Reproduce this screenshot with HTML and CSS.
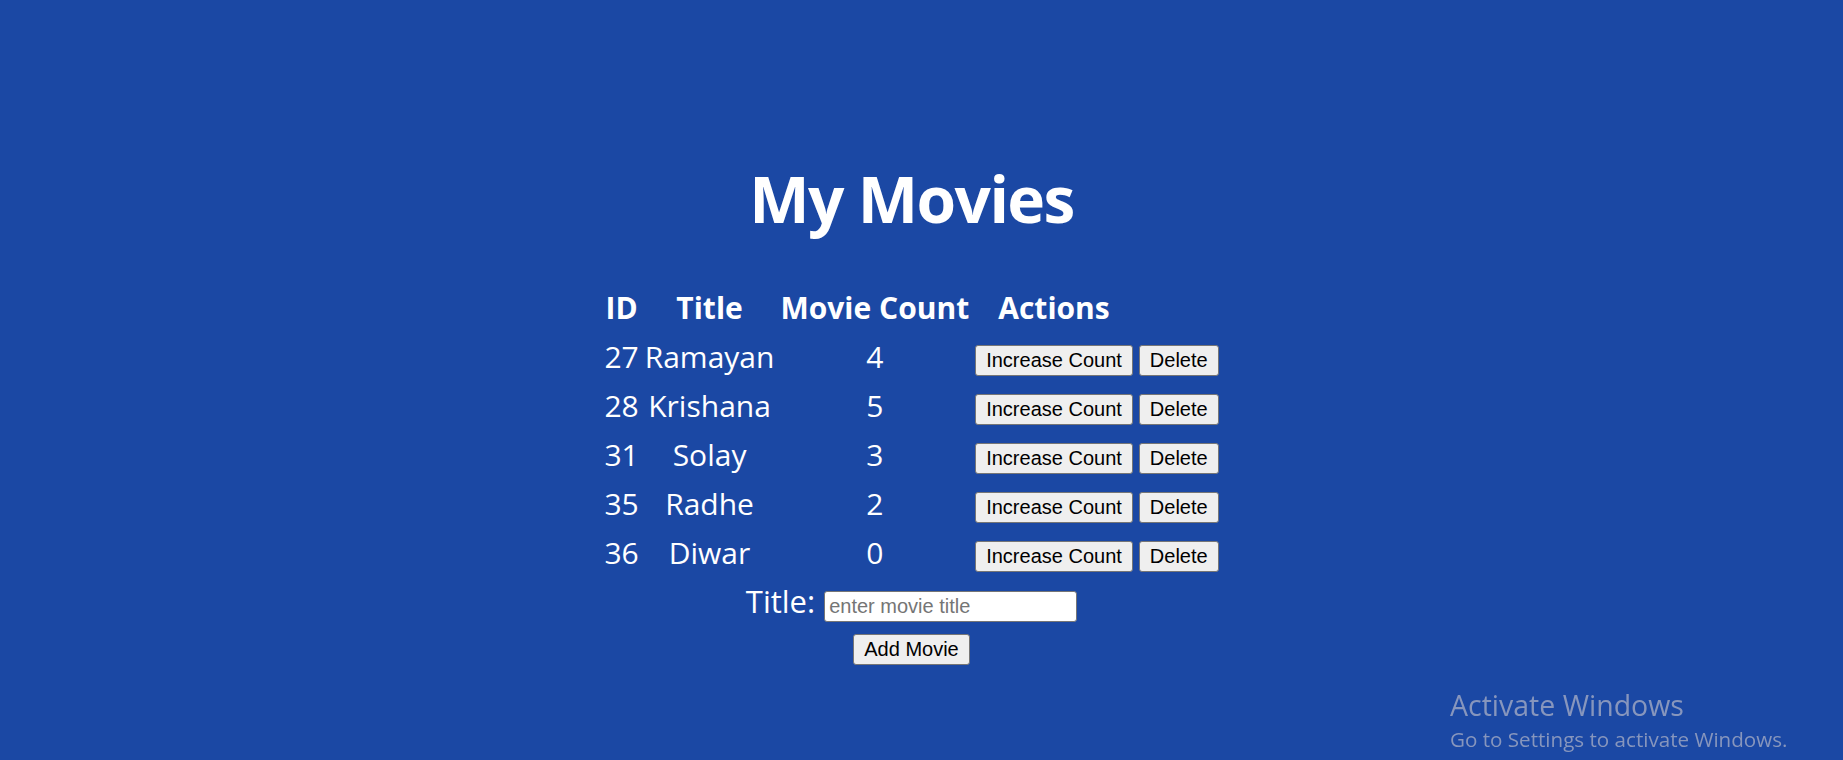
FILE: index.html
```html
<!DOCTYPE html>
<html lang="en">
<head>
<meta charset="utf-8">
<title>My Movies</title>
<link rel="stylesheet" href="styles.css">
</head>
<body>
<div class="app">
  <h1 class="page-title">My Movies</h1>
  <table class="movies">
    <thead>
      <tr><th>ID</th><th>Title</th><th>Movie Count</th><th>Actions</th></tr>
    </thead>
    <tbody>
      <tr><td>27</td><td>Ramayan</td><td>4</td><td><button class="btn">Increase Count</button></td><td><button class="btn">Delete</button></td></tr>
      <tr><td>28</td><td>Krishana</td><td>5</td><td><button class="btn">Increase Count</button></td><td><button class="btn">Delete</button></td></tr>
      <tr><td>31</td><td>Solay</td><td>3</td><td><button class="btn">Increase Count</button></td><td><button class="btn">Delete</button></td></tr>
      <tr><td>35</td><td>Radhe</td><td>2</td><td><button class="btn">Increase Count</button></td><td><button class="btn">Delete</button></td></tr>
      <tr><td>36</td><td>Diwar</td><td>0</td><td><button class="btn">Increase Count</button></td><td><button class="btn">Delete</button></td></tr>
    </tbody>
  </table>
  <form class="add-form">
    <div class="field">
      <label class="field-label" for="title">Title:</label>
      <input class="field-input" id="title" type="text" placeholder="enter movie title">
    </div>
    <button class="btn add-btn" type="button">Add Movie</button>
  </form>
</div>
<div class="watermark">
  <div class="wm-title">Activate Windows</div>
  <div class="wm-sub">Go to Settings to activate Windows.</div>
</div>
</body>
</html>
```
FILE: styles.css
```css
html, body {
  margin: 0;
  padding: 0;
}
body {
  background: #1b48a4;
  color: #ffffff;
  font-family: "Open Sans", "Noto Sans", sans-serif;
  height: 760px;
  overflow: hidden;
}
.app {
  padding: 159px 20px 0 0;
  display: flex;
  flex-direction: column;
  align-items: center;
}
.page-title {
  margin: 0 0 43px 0;
  font-size: 64px;
  line-height: 80px;
  font-weight: 700;
  letter-spacing: -1.6px;
}
.movies {
  border-spacing: 3px 2.8px;
  font-size: 30px;
}
.movies th,
.movies td {
  padding: 1.5px 1.5px;
  line-height: 44px;
  text-align: center;
  vertical-align: middle;
}
.movies th {
  font-weight: 700;
}
.movies td .btn {
  position: relative;
  top: -1px;
}
.btn {
  font-family: "Liberation Sans", Arial, sans-serif;
  font-size: 20px;
  line-height: 23px;
  padding: 3px 10px;
  border: 1px solid #767676;
  border-radius: 3px;
  background: #efefef;
  color: #000000;
  margin: 0;
}
.add-form {
  display: flex;
  flex-direction: column;
  align-items: center;
  margin-top: 3px;
}
.field {
  display: flex;
  align-items: baseline;
  gap: 9px;
}
.field-label {
  font-size: 31px;
  line-height: 40px;
}
.field-input {
  width: 253px;
  height: 31px;
  box-sizing: border-box;
  font-family: "Liberation Sans", Arial, sans-serif;
  font-size: 20px;
  padding: 2px 4px;
  border: 1px solid #767676;
  border-radius: 3px;
  background: #ffffff;
  color: #000000;
}
.field-input::placeholder {
  color: #757575;
}
.add-btn {
  margin-top: 12px;
}
.watermark {
  position: fixed;
  left: 1450px;
  top: 687px;
  color: #8796bd;
  font-family: "Open Sans", "Noto Sans", sans-serif;
}
.wm-title {
  font-size: 28.5px;
  line-height: 36px;
}
.wm-sub {
  font-size: 20.6px;
  line-height: 32px;
}
```
